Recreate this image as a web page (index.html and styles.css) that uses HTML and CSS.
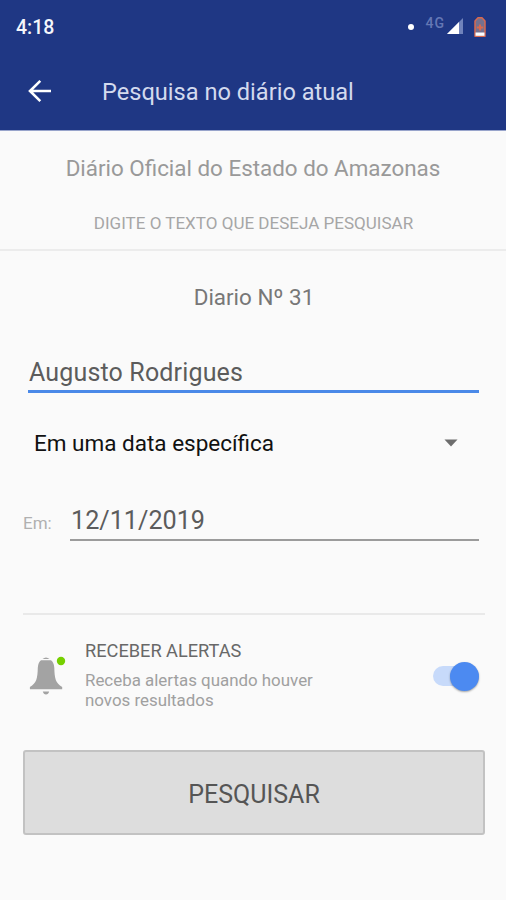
FILE: index.html
```html
<!DOCTYPE html>
<html lang="pt-BR">
<head>
    <meta charset="UTF-8" />
    <meta name="viewport" content="width=device-width, initial-scale=1.0"/>
    <title>Pesquisa no diário atual</title>
    <link rel="stylesheet" href="styles.css">
</head>
<body>

<header class="topo">
    <div class="status">
        <span class="hora">4:18</span>
        <span class="ponto"></span>
        <span class="rede">4G</span>
        <svg class="sinal" width="17" height="17" viewBox="0 0 17 17">
            <path d="M16 0V16H0Z" fill="#7183bb"/>
            <path d="M12 4V16H0Z" fill="#fff"/>
        </svg>
        <svg class="bateria" width="14" height="22" viewBox="0 0 14 22">
            <path d="M5 1.8h4L12 5v15.2H2V5z" fill="#75718f" stroke="#d9694f" stroke-width="1.5" stroke-linejoin="round"/>
            <path d="M2.5 16.5h9v3.3h-9z" fill="#fff"/>
            <path d="M7 8.5v6M3.8 11.5h6.4" stroke="#d9694f" stroke-width="2"/>
        </svg>
    </div>
    <div class="barra">
        <svg class="voltar" width="24" height="24" viewBox="0 0 24 24" fill="none" stroke="#fff" stroke-width="2.6">
            <path d="M24 12H3.5M13.3 1.9L3 12L13.3 22.1"/>
        </svg>
        <h1>Pesquisa no diário atual</h1>
    </div>
</header>

<section class="cabecalho">
    <h2>Diário Oficial do Estado do Amazonas</h2>
    <p>DIGITE O TEXTO QUE DESEJA PESQUISAR</p>
</section>

<main>
    <div class="numero">Diario Nº 31</div>

    <div class="campo texto">Augusto Rodrigues</div>

    <div class="selecao">
        <span>Em uma data específica</span>
        <svg width="14" height="8" viewBox="0 0 14 8"><path d="M0.5 0.5h13L7 7.5z" fill="#6d6d6d"/></svg>
    </div>

    <div class="linha-data">
        <span class="rotulo">Em:</span>
        <div class="campo data">12/11/2019</div>
    </div>

    <div class="alertas">
        <svg class="sino" width="38" height="42" viewBox="0 0 38 42">
            <path d="M12.5 4Q16 1 19.5 4zM12.8 36.5h6.4q-.8 3-3.2 3t-3.2-3z" fill="#a3a3a3"/>
            <path d="M11 5.2h10q3 2 3.3 7.5c.3 11 1.2 15 7.9 19.3v2.3H-.1V32c6.7-4.3 7.600-8.3 7.9-19.3Q8.1 7.2 11 5.2z" fill="#a3a3a3"/>
            <circle cx="31" cy="6" r="4.2" fill="#76d000"/>
        </svg>
        <div class="descricao">
            <h3>RECEBER ALERTAS</h3>
            <p>Receba alertas quando houver<br>novos resultados</p>
        </div>
        <div class="chave"><div class="botao-chave"></div></div>
    </div>

    <button class="pesquisar">PESQUISAR</button>
</main>

</body>
</html>
```
FILE: styles.css
```css
* {
    box-sizing: border-box;
}
body {
    margin: 0;
    height: 900px;
    font-family: Roboto, sans-serif;
    background: #fafafa;
    color: #5f5f5f;
    overflow: hidden;
}
h1, h2, h3, p {
    margin: 0;
    font-weight: normal;
}
svg {
    display: block;
    flex-shrink: 0;
    overflow: visible;
}
.topo {
    height: 131px;
    background: #1f3784;
    border-bottom: 1px solid #98a4cb;
}
.status {
    display: flex;
    align-items: center;
    height: 53px;
    padding: 0 19px 0 16px;
}
.hora {
    flex: 1;
    padding-top: 2px;
    color: #f4f6fb;
    font-size: 19.5px;
    font-weight: 500;
}
.ponto {
    width: 6px;
    height: 6px;
    border-radius: 50%;
    background: #fff;
}
.rede {
    margin: 0 2px 8px 12px;
    color: #6578b5;
    font-size: 14px;
    font-weight: 500;
    letter-spacing: 1px;
    line-height: 14px;
}
.bateria {
    margin-left: 9px;
}
.barra {
    display: flex;
    align-items: center;
    height: 75px;
    padding-left: 27px;
}
.barra h1 {
    margin-left: 51px;
    padding-top: 2px;
    color: #d3daee;
    font-size: 23.6px;
    line-height: 30px;
}
.cabecalho {
    height: 120px;
    padding-top: 22px;
    border-bottom: 2px solid #ececec;
    text-align: center;
}
.cabecalho h2 {
    color: #999;
    font-size: 22.4px;
    line-height: 30px;
}
.cabecalho p {
    margin: 30px 0 0 1px;
    color: #a6a6a6;
    font-size: 17.05px;
    line-height: 20px;
}
main {
    padding: 31px 21px 0 23px;
}
.numero {
    color: #777;
    font-size: 22.4px;
    line-height: 30px;
    text-align: center;
}
.campo {
    color: #5c5c5c;
    line-height: 30px;
}
.texto {
    margin: 46px 6px 0 5px;
    padding: 0 0 2px 1px;
    border-bottom: 3px solid #4a89e8;
    font-size: 25px;
    letter-spacing: 0.16px;
}
.selecao {
    display: flex;
    align-items: center;
    justify-content: space-between;
    margin-top: 35px;
    padding: 0 27px 0 11px;
    color: #111;
    font-size: 22.5px;
    line-height: 30px;
}
.linha-data {
    display: flex;
    margin: 48px 6px 0 0;
}
.rotulo {
    width: 47px;
    padding-top: 2px;
    color: #b0b0b0;
    font-size: 17px;
    line-height: 30px;
}
.data {
    flex: 1;
    height: 35px;
    padding-left: 1px;
    border-bottom: 2px solid #9b9b9b;
    font-size: 25.2px;
}
.alertas {
    display: flex;
    height: 137px;
    margin-top: 72px;
    border-top: 2px solid #e9e9e9;
}
.sino {
    margin: 40px 0 0 7px;
}
.descricao {
    flex: 1;
    margin: 26px 0 0 17px;
}
.descricao h3 {
    color: #686868;
    font-size: 18.2px;
    line-height: 20px;
}
.descricao p {
    margin-top: 9px;
    color: #a0a0a0;
    font-size: 16.9px;
    line-height: 20px;
}
.chave {
    display: flex;
    align-items: center;
    justify-content: flex-end;
    width: 46px;
    height: 20px;
    margin: 51px 6px 0 0;
    border-radius: 10px;
    background: #c7dafa;
}
.botao-chave {
    flex-shrink: 0;
    width: 29px;
    height: 29px;
    border-radius: 50%;
    background: #4c8af1;
    box-shadow: 0 1px 2px rgba(0, 0, 0, 0.35);
}
.pesquisar {
    display: block;
    width: 100%;
    height: 85px;
    padding: 3px 0 0;
    border: 2px solid #c2c2c2;
    border-radius: 3px;
    background: #ddd;
    color: #555;
    font-family: inherit;
    font-size: 25px;
}
```
